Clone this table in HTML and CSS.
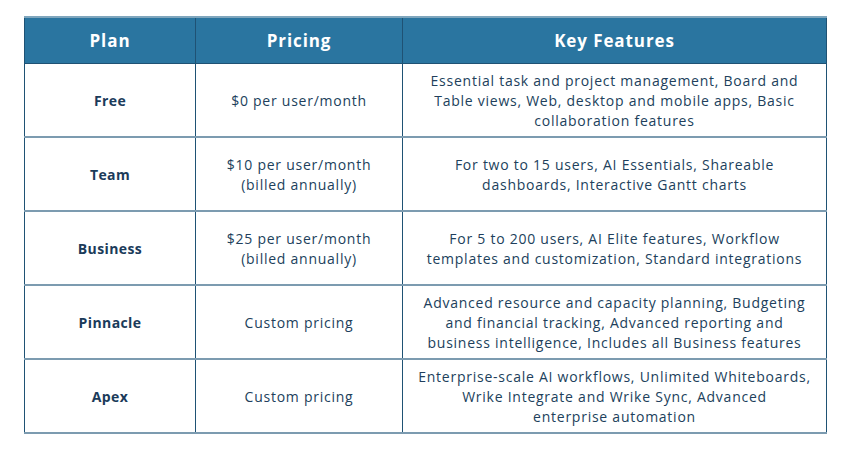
FILE: index.html
```html
<!DOCTYPE html>
<html>
<head>
<meta charset="utf-8">
<link rel="stylesheet" href="styles.css">
</head>
<body>
<div class="wrap">
<table class="plans">
  <thead>
    <tr><th class="c1">Plan</th><th class="c2">Pricing</th><th class="c3">Key Features</th></tr>
  </thead>
  <tbody>
    <tr><td class="plan">Free</td><td>$0 per user/month</td><td class="feat">Essential task and project management, Board and<br>Table views, Web, desktop and mobile apps, Basic<br>collaboration features</td></tr>
    <tr><td class="plan">Team</td><td>$10 per user/month<br>(billed annually)</td><td class="feat">For two to 15 users, AI Essentials, Shareable<br>dashboards, Interactive Gantt charts</td></tr>
    <tr><td class="plan">Business</td><td>$25 per user/month<br>(billed annually)</td><td class="feat">For 5 to 200 users, AI Elite features, Workflow<br>templates and customization, Standard integrations</td></tr>
    <tr><td class="plan">Pinnacle</td><td>Custom pricing</td><td class="feat">Advanced resource and capacity planning, Budgeting<br>and financial tracking, Advanced reporting and<br>business intelligence, Includes all Business features</td></tr>
    <tr><td class="plan">Apex</td><td>Custom pricing</td><td class="feat">Enterprise-scale AI workflows, Unlimited Whiteboards,<br>Wrike Integrate and Wrike Sync, Advanced<br>enterprise automation</td></tr>
  </tbody>
</table>
</div>
</body>
</html>
```
FILE: styles.css
```css
html, body {
  margin: 0;
  padding: 0;
  background: #ffffff;
}
.wrap {
  padding: 16px 0 0 24px;
}
.plans {
  border-collapse: collapse;
  font-family: "Open Sans", "Liberation Sans", sans-serif;
  color: #213f5c;
  font-size: 14px;
  line-height: 20px;
  table-layout: fixed;
  width: 803px;
  border-bottom: 2px solid #7c9bb0;
}
.plans th {
  background: #2a75a0;
  color: #ffffff;
  font-weight: 700;
  font-size: 17px;
  letter-spacing: 0.9px;
  height: 45px;
  padding: 0;
  border: 1px solid #1f5274;
  border-top: 2px solid #7fa6bd;
}
.c1 { width: 170px; }
.c2 { width: 206px; }
.c3 { width: auto; }
.plans td {
  text-align: center;
  vertical-align: middle;
  height: 71px;
  padding: 1px 2px 0;
  border-left: 1px solid #1f5274;
  border-right: 1px solid #1f5274;
  border-top: 2px solid #7c9bb0;
  letter-spacing: 0.75px;
  white-space: nowrap;
}
.plans td.plan {
  font-weight: 700;
  letter-spacing: 0.4px;
  color: #1b3b5a;
}
.plans tbody tr:first-child td {
  border-top: 1px solid #1f5274;
}
```
